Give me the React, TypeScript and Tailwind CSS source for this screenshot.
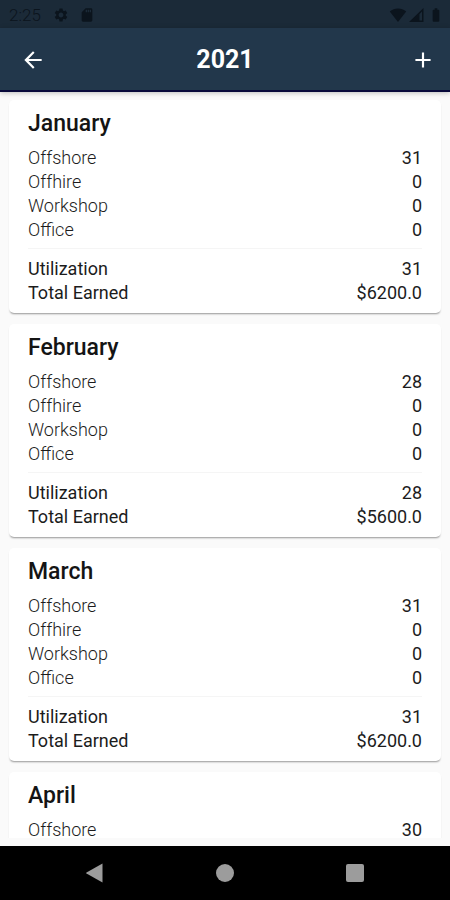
import React from "react";
import { MdAdd, MdArrowBack, MdBatteryFull, MdSdCard, MdSettings } from "react-icons/md";

type Month = {
  name: string;
  days: { label: string; value: number }[];
  utilization: number;
  earned: string;
};

function month(name: string, offshore: number, earned: string): Month {
  return {
    name,
    days: [
      { label: "Offshore", value: offshore },
      { label: "Offhire", value: 0 },
      { label: "Workshop", value: 0 },
      { label: "Office", value: 0 },
    ],
    utilization: offshore,
    earned,
  };
}

const months: Month[] = [
  month("January", 31, "$6200.0"),
  month("February", 28, "$5600.0"),
  month("March", 31, "$6200.0"),
  month("April", 30, "$6000.0"),
];

function StatusBar() {
  return (
    <div className="flex h-7 shrink-0 items-center justify-between bg-[#1b2a38] pl-[9px] pr-[6px] pt-[2px] text-[#0b141d]">
      <div className="flex items-center">
        <span className="w-[44px] text-[17px] leading-5 font-light">2:25</span>
        <MdSettings className="size-4" />
        <MdSdCard className="ml-[10px] size-4" />
      </div>
      <div className="flex items-center gap-[2px]">
        <svg viewBox="0 0 18 14" className="h-[14px] w-[18px]" fill="currentColor" aria-hidden="true">
          <path d="M9 14 0.8 3.4C3 1.4 6 0.4 9 0.4s6 1 8.200 3z" />
        </svg>
        <svg viewBox="0 0 15 14" className="h-[14px] w-[15px]" fill="currentColor" aria-hidden="true">
          <path d="M0 14 14.500 0v14zM10.500 6v6.500h2.500V3.500z" fillRule="evenodd" />
        </svg>
        <MdBatteryFull className="ml-[2px] size-4" />
      </div>
    </div>
  );
}

function AppBar() {
  return (
    <header className="relative z-10 grid h-16 shrink-0 grid-cols-[1fr_auto_1fr] items-center border-b-2 border-[#07083a] bg-[#22374b] pt-[2px] pl-5 pr-[14px] text-white shadow-[0_1px_5px_rgba(0,0,0,0.25)]">
      <button type="button" aria-label="Back" className="flex size-[26px] items-center justify-center">
        <MdArrowBack className="size-[26px]" />
      </button>
      <h1 className="pr-[6px] text-[25px] leading-8 font-bold">2021</h1>
      <button type="button" aria-label="Add" className="flex size-[26px] items-center justify-center justify-self-end">
        <MdAdd className="size-[26px]" />
      </button>
    </header>
  );
}

function MonthCard({ data }: { data: Month }) {
  return (
    <section className="shrink-0 rounded-[5px] bg-white px-[19px] pt-[10px] pb-2 shadow-[0_2px_2px_-1px_rgba(0,0,0,0.4)]">
      <h2 className="text-[23px] leading-7 font-medium text-[#141414]">{data.name}</h2>
      <dl className="mt-2 text-lg leading-6 text-[#1c1c1c]">
        {data.days.map((row) => (
          <div key={row.label} className="flex justify-between">
            <dt className="font-light">{row.label}</dt>
            <dd>{row.value}</dd>
          </div>
        ))}
      </dl>
      <hr className="mt-[6px] mb-2 border-[#f5f5f5]" />
      <dl className="text-lg leading-6 text-[#1c1c1c]">
        <div className="flex justify-between">
          <dt>Utilization</dt>
          <dd>{data.utilization}</dd>
        </div>
        <div className="flex justify-between">
          <dt>Total Earned</dt>
          <dd>{data.earned}</dd>
        </div>
      </dl>
    </section>
  );
}

function NavigationBar() {
  return (
    <nav className="flex h-[54px] shrink-0 items-center justify-center gap-[104px] bg-black text-[#9c9c9c]">
      <button type="button" aria-label="Back" className="flex size-[26px] items-center justify-center">
        <svg viewBox="0 0 26 26" className="size-[26px]" fill="currentColor" aria-hidden="true">
          <path d="M20.500 3.500v19L4.500 13.600q-.8-.6 0-1.200z" />
        </svg>
      </button>
      <button type="button" aria-label="Home" className="flex size-[26px] items-center justify-center">
        <span className="size-[18px] rounded-full bg-current" />
      </button>
      <button type="button" aria-label="Recents" className="flex size-[26px] items-center justify-center">
        <span className="size-[18px] rounded-xs bg-current" />
      </button>
    </nav>
  );
}

export default function App() {
  return (
    <div className="flex h-screen flex-col overflow-hidden bg-[#fafafa] font-[Roboto,sans-serif]">
      <StatusBar />
      <AppBar />
      <main className="mb-2 flex min-h-0 flex-1 flex-col gap-[11px] overflow-y-auto px-[9px] pt-2 [scrollbar-width:none]">
        {months.map((m) => (
          <MonthCard key={m.name} data={m} />
        ))}
      </main>
      <NavigationBar />
    </div>
  );
}
